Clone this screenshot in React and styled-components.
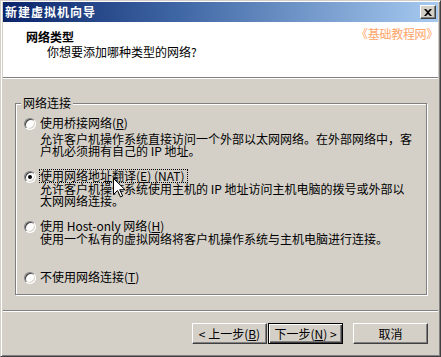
import React from "react";
import styled, { createGlobalStyle, css } from "styled-components";

const GlobalStyle = createGlobalStyle`
  html, body {
    margin: 0;
    padding: 0;
    background: #d4d0c8;
  }
  body {
    font-family: "Noto Sans CJK SC", "Liberation Sans", sans-serif;
    font-size: 12px;
    color: #000;
  }
`;

const Window = styled.div`
  position: relative;
  box-sizing: border-box;
  width: 441px;
  height: 357px;
  border: 1px solid;
  border-color: #d4d0c8 #404040 #404040 #d4d0c8;
  box-shadow: inset 1px 1px #fff, inset -1px -1px #808080;
  padding: 1px 2px 2px 2px;
  background: #d4d0c8;
  display: flex;
  flex-direction: column;
  overflow: hidden;
`;

const TitleBar = styled.div`
  height: 20px;
  flex: none;
  display: flex;
  align-items: center;
  justify-content: space-between;
  padding-left: 2px;
  padding-right: 2px;
  background: linear-gradient(to right, #0a246a 0%, #3f66a4 40%, #a6caf0 100%);
`;

const Title = styled.span`
  color: #fff;
  font-weight: bold;
  font-size: 12px;
  line-height: 12px;
  letter-spacing: 1px;
`;

const CloseButton = styled.button`
  box-sizing: border-box;
  width: 16px;
  height: 14px;
  padding: 0;
  margin: 0;
  display: flex;
  align-items: center;
  justify-content: center;
  background: #d4d0c8;
  border: 1px solid;
  border-color: #fff #404040 #404040 #fff;
  box-shadow: inset -1px -1px #808080;
`;

const Header = styled.div`
  position: relative;
  height: 56px;
  flex: none;
  background: #fff;
  border-bottom: 1px solid #808080;
  padding-top: 9px;
  box-sizing: border-box;
`;

const HeaderTitle = styled.div`
  padding-left: 23px;
  font-weight: bold;
  line-height: 12px;
`;

const HeaderSub = styled.div`
  padding-left: 44px;
  margin-top: 3px;
  line-height: 12px;
`;

const Watermark = styled.div`
  position: absolute;
  top: 5px;
  right: 0;
  color: #ffa468;
  font-size: 12px;
  line-height: 13px;
  letter-spacing: -0.3px;
`;

const Body = styled.div`
  flex: 1;
  display: flex;
  flex-direction: column;
  border-top: 1px solid #fff;
`;

const Content = styled.div`
  padding: 24px 11px 0 12px;
`;

const GroupBox = styled.div`
  position: relative;
  box-sizing: border-box;
  height: 192px;
  border: 1px solid #808080;
  box-shadow: inset 1px 1px #fff, 1px 1px #fff;
  padding: 0 8px;
  display: flex;
  flex-direction: column;
`;

const Legend = styled.span`
  position: absolute;
  top: -7px;
  left: 5px;
  padding: 0 2px;
  background: #d4d0c8;
  line-height: 12px;
`;

const Option = styled.div`
  display: flex;
  align-items: flex-start;
  gap: 4px;
  margin-top: ${(p) => p.$mt}px;
`;

const Radio = styled.span`
  position: relative;
  box-sizing: border-box;
  flex: none;
  width: 12px;
  height: 12px;
  margin-top: 1px;
  border-radius: 50%;
  background: #fff;
  border: 1px solid;
  border-color: #808080 #fff #fff #808080;
  box-shadow: inset 1px 1px #404040, inset -1px -1px #d4d0c8;

  ${(p) =>
    p.$checked &&
    css`
      &::after {
        content: "";
        position: absolute;
        left: 3px;
        top: 3px;
        width: 4px;
        height: 4px;
        border-radius: 50%;
        background: #000;
      }
    `}
`;

const OptionText = styled.div`
  display: flex;
  flex-direction: column;
  white-space: nowrap;
`;

const Label = styled.span`
  align-self: flex-start;
  line-height: 12px;
  ${(p) =>
    p.$focused &&
    css`
      outline: 1px dotted #000;
      padding-right: 3px;
    `}
`;

const Desc = styled.div`
  line-height: 12px;
  margin-top: ${(p) => p.$gap}px;
`;

const Key = styled.span`
  text-decoration: underline;
`;

const Separator = styled.div`
  margin-top: 15px;
  border-top: 1px solid #808080;
  border-bottom: 1px solid #fff;
`;

const Footer = styled.div`
  display: flex;
  justify-content: flex-end;
  padding: 11px 10px 0 0;
`;

const Button = styled.button`
  box-sizing: border-box;
  width: 75px;
  height: 21px;
  padding: 0;
  margin: 0 0 0 ${(p) => p.$gap || 0}px;
  font-family: "Noto Sans CJK SC", "Liberation Sans", sans-serif;
  font-size: 12px;
  line-height: 12px;
  color: #000;
  background: #d4d0c8;
  border: 1px solid;
  border-color: #fff #404040 #404040 #fff;
  box-shadow: inset -1px -1px #808080;

  ${(p) =>
    p.$default &&
    css`
      border-color: #000;
      box-shadow: inset 1px 1px #fff, inset -1px -1px #404040,
        inset -2px -2px #808080;
    `}
`;

const Cursor = styled.svg`
  position: absolute;
  left: 112px;
  top: 177px;
  z-index: 5;
`;

const options = [
  {
    label: "使用桥接网络",
    key: "R",
    lines: [
      "允许客户机操作系统直接访问一个外部以太网网络。在外部网络中，客",
      "户机必须拥有自己的 IP 地址。",
    ],
    mt: 13,
    gap: 4,
  },
  {
    label: "使用网络地址翻译",
    key: "E",
    suffix: " (NAT)",
    lines: [
      "允许客户机操作系统使用主机的 IP 地址访问主机电脑的拨号或外部以",
      "太网网络连接。",
    ],
    mt: 13,
    gap: 1,
    checked: true,
  },
  {
    label: "使用 Host-only 网络",
    key: "H",
    lines: ["使用一个私有的虚拟网络将客户机操作系统与主机电脑进行连接。"],
    mt: 13,
    gap: 1,
  },
  {
    label: "不使用网络连接",
    key: "T",
    lines: [],
    mt: 26,
  },
];

export default function App() {
  return (
    <>
      <GlobalStyle />
      <Window>
        <TitleBar>
          <Title>新建虚拟机向导</Title>
          <CloseButton aria-label="关闭">
            <svg width="8" height="7" viewBox="0 0 8 7">
              <path
                d="M0 0h2l2 2 2-2h2L5 3.5 8 7H6L4 5 2 7H0l3-3.5z"
                fill="#000"
              />
            </svg>
          </CloseButton>
        </TitleBar>

        <Header>
          <HeaderTitle>网络类型</HeaderTitle>
          <HeaderSub>你想要添加哪种类型的网络?</HeaderSub>
          <Watermark>《基础教程网》</Watermark>
        </Header>

        <Body>
          <Content>
            <GroupBox>
              <Legend>网络连接</Legend>
              {options.map((o) => (
                <Option key={o.key} $mt={o.mt}>
                  <Radio $checked={o.checked} />
                  <OptionText>
                    <Label $focused={o.checked}>
                      {o.label}(<Key>{o.key}</Key>){o.suffix}
                    </Label>
                    {o.lines.map((l, i) => (
                      <Desc key={i} $gap={i === 0 ? o.gap : 0}>
                        {l}
                      </Desc>
                    ))}
                  </OptionText>
                </Option>
              ))}
            </GroupBox>
          </Content>
          <Separator />
          <Footer>
            <Button>
              &lt; 上一步(<Key>B</Key>)
            </Button>
            <Button $default $gap={1}>
              下一步(<Key>N</Key>) &gt;
            </Button>
            <Button $gap={10}>取消</Button>
          </Footer>
        </Body>

        <Cursor width="12" height="20" viewBox="0 0 12 20">
          <path
            d="M0.5 0.5v16l4-4 3 6.5 2.2-1-3-6.3h5.3z"
            fill="#fff"
            stroke="#000"
            strokeWidth="1"
            strokeLinejoin="miter"
          />
        </Cursor>
      </Window>
    </>
  );
}
